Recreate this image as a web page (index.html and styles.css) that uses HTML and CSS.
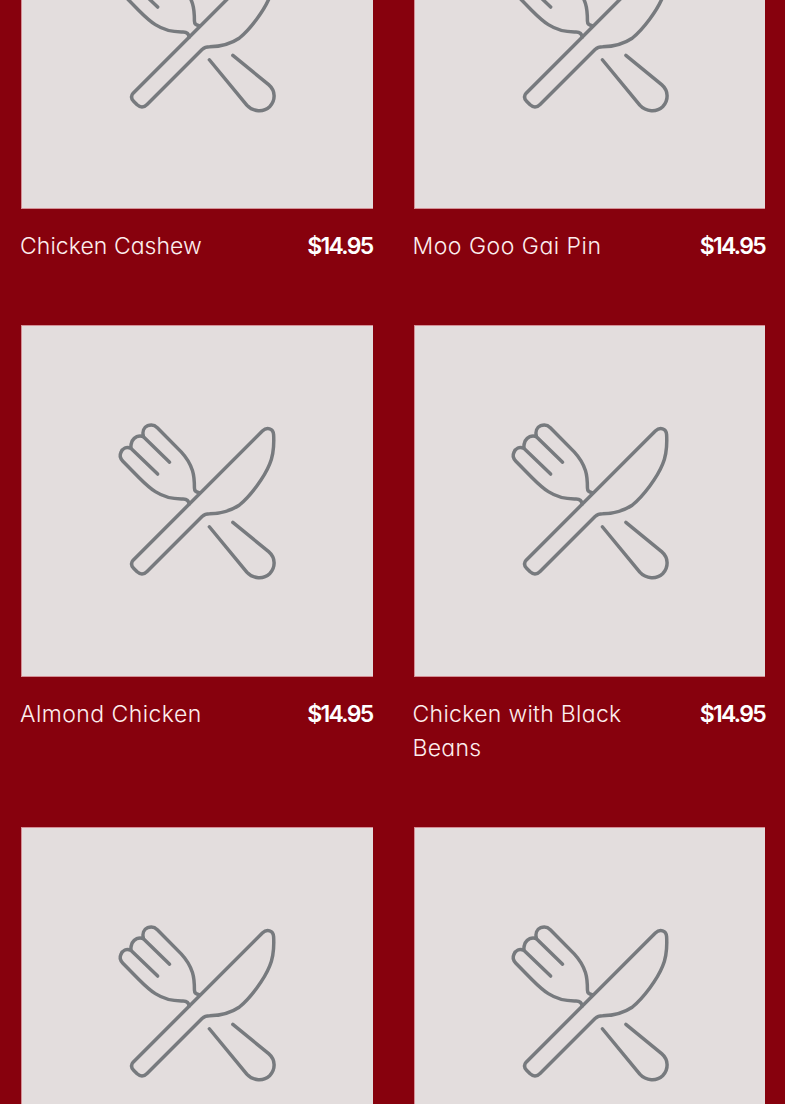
FILE: index.html
```html
<!DOCTYPE html>
<html lang="en">
<head>
    <meta charset="UTF-8">
    <meta name="viewport" content="width=device-width, initial-scale=1.0">
    <title>Chicken</title>
    <link rel="stylesheet" href="styles.css">
</head>
<body>
    <!-- fork and knife, shared by every dish without a photo -->
    <svg class="defs">
        <symbol id="cutlery" viewBox="-236 -257 1055 1055">
            <path d="M267 281C266 270 260 265 249 265C216 266 190 259 165 243C146 231 132 217 116 201L67 151C58 142 57 133 61 125C66 112 78 107 91 112C91 95 97 82 109 77C116 74 122 74 129 77C125 62 130 49 142 44C152 40 163 42 171 50L243 123C256 137 270 158 277 179C283 198 283 213 283 232C283 239 288 245 298 246"/>
            <path d="M91 112L172 190M129 77L208 154"/>
            <path d="M98 450L488 60C502 47 521 52 522 71C524 106 521 134 510 160C494 200 452 256 418 284C390 303 361 309 329 310C319 310 314 311 306 318L140 484C130 494 119 493 110 485L100 475C92 467 91 458 98 450Z"/>
            <path d="M328 349L441 486C460 507 492 508 510 491C528 472 529 443 507 424L399 336"/>
        </symbol>
    </svg>
    <ul id="menu">
        <li>
            <svg class="pic"><use href="#cutlery"/></svg>
            <div class="info">
                <span class="name cashew">Chicken Cashew</span>
                <span class="price">$14.95</span>
            </div>
        </li>
        <li>
            <svg class="pic"><use href="#cutlery"/></svg>
            <div class="info">
                <span class="name moo">Moo Goo Gai Pin</span>
                <span class="price">$14.95</span>
            </div>
        </li>
        <li>
            <svg class="pic"><use href="#cutlery"/></svg>
            <div class="info">
                <span class="name almond">Almond Chicken</span>
                <span class="price">$14.95</span>
            </div>
        </li>
        <li>
            <svg class="pic"><use href="#cutlery"/></svg>
            <div class="info">
                <span class="name">Chicken with Black Beans</span>
                <span class="price">$14.95</span>
            </div>
        </li>
        <li>
            <svg class="pic"><use href="#cutlery"/></svg>
        </li>
        <li>
            <svg class="pic"><use href="#cutlery"/></svg>
        </li>
    </ul>
</body>
</html>
```
FILE: styles.css
```css
*{
    margin: 0;
    padding: 0;
    list-style: none;
    box-sizing: border-box;
}
html,body{
    height: 100%;
    overflow: hidden;
}
body{
    background-color: #87010d;
    color: #fff;
    font-family: Inter, "Open Sans", sans-serif;
}
.defs{
    display: none;
}
#menu{
    display: grid;
    grid-template-columns: 1fr 1fr;
    gap: 61.4px 40px;
    padding: 0 20px;
    /* the list is scrolled part way down */
    margin-top: -142.4px;
}
.pic{
    display: block;
    width: calc(100% - 1px);
    margin-left: 1px;
    aspect-ratio: 1;
    background-color: #e3dddd;
    border: 1px solid #d48f96;
    border-right: 0;
    fill: none;
    stroke: #777a7e;
    stroke-width: 10.5;
    stroke-linecap: round;
    stroke-linejoin: round;
}
.info{
    display: flex;
    justify-content: space-between;
    margin-top: 21.2px;
    line-height: 33.6px;
}
.name{
    width: 235px;
    color: #fdeeee;
    font-size: 23px;
    font-weight: 300;
    letter-spacing: 0.3px;
    /* single-storey a */
    font-feature-settings: "cv11";
}
.cashew{
    letter-spacing: 0.05px;
}
.moo{
    letter-spacing: 0.5px;
}
.almond{
    letter-spacing: 0.45px;
}
.price{
    font-size: 23px;
    font-weight: 600;
    letter-spacing: -1.7px;
}
```
